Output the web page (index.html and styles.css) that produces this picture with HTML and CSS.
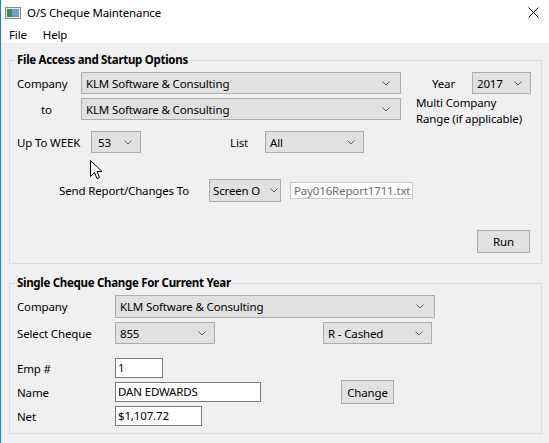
FILE: index.html
```html
<html lang="en">
<head>
    <meta charset="UTF-8">
    <title>O/S Cheque Maintenance</title>
    <link rel="stylesheet" href="styles.css">
</head>
<body>
    <div class="window">
        <div class="titlebar">
            <svg class="app-icon" width="16" height="12" viewBox="0 0 16 12">
                <rect x="0.5" y="0.5" width="15" height="11" fill="#e8e8e8" stroke="#8a8a8a"/>
                <rect x="2" y="2" width="5" height="8" fill="#3a8a6a"/>
                <rect x="7" y="2" width="7" height="8" fill="#6aa0c8"/>
            </svg>
            <span class="title">O/S Cheque Maintenance</span>
            <svg class="close" width="11" height="11" viewBox="0 0 11 11">
                <path d="M0.5 0.5 L10.5 10.5 M10.5 0.5 L0.5 10.5" stroke="#000" stroke-width="1"/>
            </svg>
        </div>
        <div class="menubar">
            <span class="menu-item">File</span>
            <span class="menu-item">Help</span>
        </div>

        <div class="client">
            <fieldset class="group group-startup">
                <legend>File Access and Startup Options</legend>

                <div class="company-block">
                    <div class="company-rows">
                        <div class="row">
                            <span class="lbl w-company">Company</span>
                            <div class="combo w-320"><span>KLM Software &amp; Consulting</span>
                                <svg class="chev" width="8" height="5" viewBox="0 0 8 5"><path d="M0.5 0.5 L4 4 L7.5 0.5" fill="none" stroke="#606060"/></svg></div>
                        </div>
                        <div class="row gap-4">
                            <span class="lbl w-company lbl-to">to</span>
                            <div class="combo w-320"><span>KLM Software &amp; Consulting</span>
                                <svg class="chev" width="8" height="5" viewBox="0 0 8 5"><path d="M0.5 0.5 L4 4 L7.5 0.5" fill="none" stroke="#606060"/></svg></div>
                        </div>
                    </div>
                    <div class="year-col">
                        <div class="row">
                            <span class="lbl lbl-year">Year</span>
                            <div class="combo w-year"><span>2017</span>
                                <svg class="chev" width="8" height="5" viewBox="0 0 8 5"><path d="M0.5 0.5 L4 4 L7.5 0.5" fill="none" stroke="#606060"/></svg></div>
                        </div>
                        <p class="note">Multi Company<br>Range (if applicable)</p>
                    </div>
                </div>

                <div class="row row-week">
                    <span class="lbl w-week">Up To WEEK</span>
                    <div class="combo w-50 pad-6"><span>53</span>
                        <svg class="chev" width="8" height="5" viewBox="0 0 8 5"><path d="M0.5 0.5 L4 4 L7.5 0.5" fill="none" stroke="#606060"/></svg></div>
                    <span class="lbl lbl-list">List</span>
                    <div class="combo w-99"><span>All</span>
                        <svg class="chev" width="8" height="5" viewBox="0 0 8 5"><path d="M0.5 0.5 L4 4 L7.5 0.5" fill="none" stroke="#606060"/></svg></div>
                </div>

                <div class="row row-send">
                    <span class="lbl w-send">Send Report/Changes To</span>
                    <div class="combo w-72 h-23"><span>Screen O</span>
                        <svg class="chev" width="8" height="5" viewBox="0 0 8 5"><path d="M0.5 0.5 L4 4 L7.5 0.5" fill="none" stroke="#606060"/></svg></div>
                    <div class="textbox disabled w-123">Pay016Report1711.txt</div>
                </div>

                <div class="row row-run">
                    <button class="btn">Run</button>
                </div>
            </fieldset>

            <fieldset class="group group-single">
                <legend>Single Cheque Change For Current Year</legend>

                <div class="row h-23">
                    <span class="lbl w-98">Company</span>
                    <div class="combo w-320 h-23"><span>KLM Software &amp; Consulting</span>
                        <svg class="chev" width="8" height="5" viewBox="0 0 8 5"><path d="M0.5 0.5 L4 4 L7.5 0.5" fill="none" stroke="#606060"/></svg></div>
                </div>
                <div class="row gap-4">
                    <span class="lbl w-98">Select Cheque</span>
                    <div class="combo w-100"><span>855</span>
                        <svg class="chev" width="8" height="5" viewBox="0 0 8 5"><path d="M0.5 0.5 L4 4 L7.5 0.5" fill="none" stroke="#606060"/></svg></div>
                    <div class="combo w-109 status"><span>R - Cashed</span>
                        <svg class="chev" width="8" height="5" viewBox="0 0 8 5"><path d="M0.5 0.5 L4 4 L7.5 0.5" fill="none" stroke="#606060"/></svg></div>
                </div>

                <div class="row row-emp">
                    <span class="lbl w-98">Emp #</span>
                    <div class="textbox w-48">1</div>
                </div>
                <div class="row row-field">
                    <span class="lbl w-98">Name</span>
                    <div class="textbox w-146">DAN EDWARDS</div>
                    <button class="btn btn-change">Change</button>
                </div>
                <div class="row row-field">
                    <span class="lbl w-98">Net</span>
                    <div class="textbox w-87">$1,107.72</div>
                </div>
            </fieldset>
        </div>

        <!-- mouse pointer caught in the screenshot -->
        <svg class="pointer" width="13" height="20" viewBox="0 0 13 20">
            <path d="M0.5 0.5 L0.5 16.5 L4.5 12.5 L7 18.5 L9.5 17.5 L7 11.5 L12 11.5 Z" fill="#fff" stroke="#000" stroke-width="1"/>
        </svg>
    </div>
</body>
</html>
```

FILE: styles.css
```css
body {
    margin: 0;
    padding: 0;
    font-family: 'Noto Sans', 'Open Sans', sans-serif;
    font-size: 11.5px;
    letter-spacing: -0.15px;
    color: #000;
    background: #f0f0f0;
}

.window {
    position: relative;
    width: 548px;
    height: 443px;
    border-left: 1px solid #1883d7;
    background: #f0f0f0;
    overflow: hidden;
}

.titlebar {
    display: flex;
    align-items: center;
    height: 25px;
    padding-bottom: 2px;
    background: #fff;
}

.app-icon {
    margin-left: 4px;
    margin-right: 6px;
}

.title {
    flex: 1;
}

.close {
    margin-right: 10px;
}

.menubar {
    display: flex;
    height: 16px;
    line-height: 16px;
    background: #fff;
}

.menu-item {
    padding-left: 8px;
    padding-right: 8px;
}

.client {
    padding-top: 9px;
}

.group {
    margin: 0 0 0 8px;
    width: 533px;
    border: 1px solid #dcdcdc;
    padding: 4px 11px 10px 7px;
    box-sizing: border-box;
    min-width: 0;
}

.group legend {
    font-weight: bold;
    line-height: 16px;
    padding: 0 2px;
    margin-left: -2px;
    letter-spacing: -0.3px;
}

.group-single {
    margin-top: 11px;
    padding-bottom: 7px;
}

.row {
    display: flex;
    align-items: center;
    height: 22px;
}

.gap-4 {
    margin-top: 4px;
}

.lbl {
    flex-shrink: 0;
    white-space: nowrap;
}

.w-company { width: 64px; }
.lbl-to { padding-left: 24px; box-sizing: border-box; }
.w-week { width: 74px; }
.w-send { width: 150px; }
.w-98 { width: 98px; }

.company-block {
    display: flex;
    height: 48px;
}

.year-col {
    margin-left: 15px;
}

.lbl-year {
    margin-left: 16px;
    width: 40px;
}

.note {
    margin: 1px 0 0 0;
    line-height: 16px;
}

.combo {
    display: flex;
    align-items: center;
    justify-content: space-between;
    height: 22px;
    box-sizing: border-box;
    border: 1px solid #adadad;
    background: #e1e1e1;
    padding: 0 8px 0 4px;
    white-space: nowrap;
    overflow: hidden;
    flex-shrink: 0;
}

.combo span {
    overflow: hidden;
}

.chev {
    flex-shrink: 0;
    margin-left: 4px;
}

.pad-6 { padding-left: 6px; }
.h-23 { height: 23px; }

.w-320 { width: 320px; padding-right: 10px; }
.w-year { width: 59px; }
.w-50 { width: 50px; }
.w-99 { width: 99px; }
.w-72 { width: 72px; padding-left: 3px; padding-right: 2px; }
.w-100 { width: 100px; }
.w-109 { width: 109px; }

.lbl-list {
    margin-left: 89px;
    width: 35px;
}

.row-week {
    margin-top: 11px;
}

.row-send {
    margin-top: 26px;
    height: 23px;
    padding-left: 42px;
}

.row-run {
    margin-top: 28px;
    height: 23px;
    justify-content: flex-end;
}

.textbox {
    height: 20px;
    line-height: 18px;
    box-sizing: border-box;
    border: 1px solid #7a7a7a;
    background: #fff;
    padding: 0 2px;
    white-space: nowrap;
    overflow: hidden;
    flex-shrink: 0;
}

.textbox.disabled {
    height: 17px;
    line-height: 15px;
    border-color: #cccccc;
    color: #6d6d6d;
    margin-left: 9px;
    padding-left: 3px;
}

.w-123 { width: 123px; }
.w-48 { width: 48px; }
.w-146 { width: 146px; }
.w-87 { width: 87px; }

.status {
    margin-left: 108px;
}

.btn {
    font-family: inherit;
    font-size: inherit;
    letter-spacing: inherit;
    height: 23px;
    width: 53px;
    border: 1px solid #adadad;
    background: #e1e1e1;
    color: #000;
    padding: 0;
}

.btn-change {
    height: 24px;
    margin-left: 80px;
}

.row-emp {
    margin-top: 14px;
    height: 20px;
}

.row-field {
    margin-top: 4px;
    height: 20px;
}

.pointer {
    position: absolute;
    left: 89px;
    top: 160px;
}
```
